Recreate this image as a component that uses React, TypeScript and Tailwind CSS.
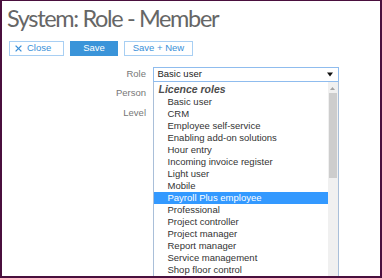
import React from 'react'

const items = [
  'Basic user',
  'CRM',
  'Employee self-service',
  'Enabling add-on solutions',
  'Hour entry',
  'Incoming invoice register',
  'Light user',
  'Mobile',
  'Payroll Plus employee',
  'Professional',
  'Project controller',
  'Project manager',
  'Report manager',
  'Service management',
  'Shop floor control',
]

const labelCls = "w-[144px] shrink-0 text-right text-[9.5px] text-[#777] [font-family:'Liberation_Sans',Arial,sans-serif]"

const App = () => {
  return (
    <div className="w-[382px] h-[278px] bg-white border-[#4a0f3e] border-t border-l-2 border-r-2 border-b-2 overflow-hidden relative [font-family:'Liberation_Sans',Arial,sans-serif]">
      {/* heading */}
      <h1 className="pl-[5px] pt-[5px] text-[23.5px] leading-[24px] font-normal tracking-[-1.35px] text-[#666] [font-family:'Lato',sans-serif]">
        System: Role - Member
      </h1>

      {/* toolbar */}
      <div className="flex gap-[6px] pl-[7px] mt-[10.5px]">
        <button className="h-[15px] w-[55px] flex items-center gap-[5px] pl-[5px] border border-[#a8cff3] text-[#3a8fd8] text-[9.5px] leading-none">
          <svg width="7" height="7" viewBox="0 0 7 7" className="shrink-0">
            <path d="M0.6 0.6 L6.4 6.4 M6.4 0.6 L0.6 6.4" stroke="#3a8fd8" strokeWidth="1.3" />
          </svg>
          Close
        </button>
        <button className="h-[15px] w-[48px] bg-[#3a94d9] text-white text-[9.5px] leading-none">
          Save
        </button>
        <button className="h-[15px] w-[69px] border border-[#a8cff3] text-[#3a8fd8] text-[9.5px] leading-none">
          Save + New
        </button>
      </div>

      {/* form */}
      <div className="mt-[11px] flex flex-col gap-[4.5px]">
        <div className="flex items-center gap-[6.5px] h-[15px]">
          <span className={labelCls}>Role</span>
          <div className="w-[186px] h-[15px] border border-[#8fbcee] flex items-center justify-between pl-[4px] pr-[5px] text-[9.5px] text-[#222]">
            <span>Basic user</span>
            <svg width="6" height="5" viewBox="0 0 6 5">
              <path d="M0 0.5 H6 L3 4.5 Z" fill="#111" />
            </svg>
          </div>
        </div>
        <div className="flex items-center h-[15px]">
          <span className={labelCls}>Person</span>
        </div>
        <div className="flex items-center h-[15px]">
          <span className={labelCls}>Level</span>
        </div>
      </div>

      {/* open dropdown list */}
      <div className="absolute left-[150.5px] top-[81px] w-[186px] h-[220px] bg-white border border-[#a9bfd9] border-t-0 flex text-[9.5px]">
        <div className="flex-1 flex flex-col">
          <div className="h-[14px] leading-[14px] pl-[5px] font-bold italic text-[10.5px] text-[#4d4d4d]">
            Licence roles
          </div>
          {items.map((it) => (
            <div
              key={it}
              className={
                it === 'Payroll Plus employee'
                  ? 'h-[12px] leading-[12px] pl-[14px] bg-[#3399ff] text-white'
                  : 'h-[12px] leading-[12px] pl-[14px] text-[#333]'
              }
            >
              {it}
            </div>
          ))}
        </div>
        <div className="w-[10px] bg-[#f0f0f0] flex flex-col items-center">
          <svg width="5" height="3" viewBox="0 0 5 3" className="mt-[5px]">
            <path d="M0 3 L2.5 0 L5 3 Z" fill="#a3a3a3" />
          </svg>
          <div className="mt-[3px] w-[8px] h-[85px] bg-[#cdcdcd]" />
        </div>
      </div>
    </div>
  )
}

export default App
